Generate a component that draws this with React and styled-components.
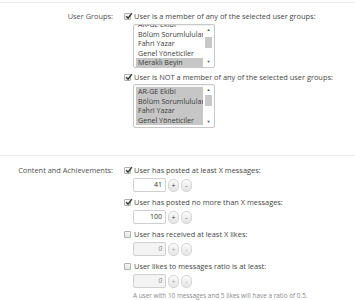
import React from "react";
import styled, { createGlobalStyle } from "styled-components";

const GlobalStyle = createGlobalStyle`
  html, body {
    margin: 0;
    padding: 0;
    background: #ffffff;
  }
  body {
    font-family: "Open Sans", "Liberation Sans", sans-serif;
    color: #444;
  }
`;

const groups = ["AR-GE Ekibi", "Bölüm Sorumluluları", "Fahri Yazar", "Genel Yöneticiler", "Meraklı Beyin"];

const App = () => {
  return (
    <>
      <GlobalStyle />
      <Form>
        <Fieldset>
          <Row>
            <Label>User Groups:</Label>
            <Controls>
              <CheckLine checked>User is a member of any of the selected user groups:</CheckLine>
              <Indent>
                <ListBox items={groups} offset={-7} thumbTop={11} selected={[4]} />
              </Indent>
              <CheckLine checked gap={3}>User is NOT a member of any of the selected user groups:</CheckLine>
              <Indent>
                <ListBox items={groups.slice(0, 4)} offset={0} thumbTop={9} selected={[0, 1, 2, 3]} gap={1} />
              </Indent>
            </Controls>
          </Row>
        </Fieldset>
        <Fieldset>
          <Row second>
            <Label>Content and Achievements:</Label>
            <Controls>
              <Option>
                <CheckLine checked>User has posted at least X messages:</CheckLine>
                <Indent>
                  <Spinner value="41" />
                </Indent>
              </Option>
              <Option>
                <CheckLine checked>User has posted no more than X messages:</CheckLine>
                <Indent>
                  <Spinner value="100" />
                </Indent>
              </Option>
              <Option>
                <CheckLine>User has received at least X likes:</CheckLine>
                <Indent>
                  <Spinner value="0" disabled />
                </Indent>
              </Option>
              <Option>
                <CheckLine>User likes to messages ratio is at least:</CheckLine>
                <Indent>
                  <Spinner value="0" disabled />
                  <Hint>A user with 10 messages and 5 likes will have a ratio of 0.5.</Hint>
                </Indent>
              </Option>
            </Controls>
          </Row>
        </Fieldset>
      </Form>
    </>
  );
};

const CheckLine = ({ checked, gap, children }) => (
  <Line gap={gap}>
    <Box>
      {checked && (
        <svg width="8" height="8" viewBox="0 0 8 8">
          <path d="M1.2 4.2 L3.1 6.2 L6.9 1.2" fill="none" stroke="#333" strokeWidth="1.4" />
        </svg>
      )}
    </Box>
    <span>{children}</span>
  </Line>
);

const ListBox = ({ items, offset, thumbTop, selected, gap }) => (
  <List gap={gap}>
    <Items style={{ marginTop: offset }}>
      {items.map((g, i) => (
        <Item key={g} selected={selected.includes(i)}>{g}</Item>
      ))}
    </Items>
    <Scroll>
      <Arrow>▲</Arrow>
      <Thumb style={{ top: thumbTop }} />
      <Arrow down>▼</Arrow>
    </Scroll>
  </List>
);

const Spinner = ({ value, disabled }) => (
  <SpinRow>
    <NumInput disabled={disabled}>{value}</NumInput>
    <SpinButton disabled={disabled}>+</SpinButton>
    <SpinButton disabled={disabled}>-</SpinButton>
  </SpinRow>
);

const Form = styled.div`
  width: 355px;
  padding-top: 2px;
`;

const Fieldset = styled.div`
  border-top: 1px solid #e6eaef;
`;

const Row = styled.div`
  display: grid;
  grid-template-columns: 124px 1fr;
  padding: ${(p) => (p.second ? "8px 0 0" : "7px 0 27px")};
`;

const Label = styled.div`
  text-align: right;
  padding-right: 11px;
  font-size: 7.4px;
  line-height: 12px;
  color: #505050;
  white-space: nowrap;
`;

const Controls = styled.div`
  display: flex;
  flex-direction: column;
`;

const Option = styled.div`
  display: flex;
  flex-direction: column;
  margin-bottom: 4px;
`;

const Line = styled.div`
  display: flex;
  align-items: center;
  gap: 3px;
  height: 12px;
  margin-top: ${(p) => p.gap || 0}px;
  font-size: 7.4px;
  color: #454545;
  white-space: nowrap;
`;

const Box = styled.span`
  position: relative;
  width: 7px;
  height: 7px;
  border: 1px solid #b0b0b0;
  border-radius: 1px;
  background: linear-gradient(#f8f8f8, #e4e4e4);
  flex: none;
  box-sizing: border-box;
  svg {
    position: absolute;
    left: -0.5px;
    top: -1.5px;
  }
`;

const Indent = styled.div`
  padding-left: 9px;
`;

const List = styled.div`
  position: relative;
  width: 82px;
  height: 44px;
  margin-top: ${(p) => (p.gap === undefined ? 2 : p.gap)}px;
  border: 1px solid #c8c8c8;
  border-radius: 2px;
  box-sizing: border-box;
  background: #fff;
  overflow: hidden;
  box-shadow: inset 0 1px 2px rgba(0, 0, 0, 0.06);
`;

const Items = styled.div`
  padding: 2px 11px 0 2px;
`;

const Item = styled.div`
  height: 9.6px;
  line-height: 9.6px;
  font-size: 7.1px;
  padding-left: 2px;
  color: #3a3a3a;
  white-space: nowrap;
  overflow: hidden;
  background: ${(p) => (p.selected ? "#c6c6c6" : "transparent")};
`;

const Scroll = styled.div`
  position: absolute;
  right: 1px;
  top: 1px;
  bottom: 1px;
  width: 9px;
  background: #fff;
`;

const Arrow = styled.div`
  position: absolute;
  left: 0;
  width: 9px;
  text-align: center;
  font-size: 4px;
  line-height: 6px;
  color: #555;
  ${(p) => (p.down ? "bottom: 1px;" : "top: 1px;")}
`;

const Thumb = styled.div`
  position: absolute;
  left: 1px;
  width: 7px;
  height: 11px;
  background: #c8c8c8;
`;

const SpinRow = styled.div`
  display: flex;
  align-items: center;
  gap: 2px;
  margin-top: 2px;
  height: 14px;
`;

const NumInput = styled.div`
  width: 33px;
  height: 14px;
  box-sizing: border-box;
  border: 1px solid #d0d0d0;
  border-radius: 2px;
  background: ${(p) => (p.disabled ? "#f3f3f3" : "#fff")};
  font-size: 7px;
  line-height: 12px;
  text-align: right;
  padding-right: 3px;
  color: ${(p) => (p.disabled ? "#888" : "#333")};
  font-style: ${(p) => (p.disabled ? "italic" : "normal")};
`;

const SpinButton = styled.div`
  width: 11px;
  height: 13px;
  box-sizing: border-box;
  border: 1px solid #d6d6d6;
  border-radius: 5px;
  background: linear-gradient(#fbfbfb, #e4e4e4);
  font-size: 7px;
  line-height: 11px;
  text-align: center;
  color: ${(p) => (p.disabled ? "#aaa" : "#444")};
`;

const Hint = styled.div`
  margin-top: 3px;
  font-size: 6.4px;
  line-height: 9px;
  color: #8a8a8a;
  white-space: nowrap;
`;

export default App;
